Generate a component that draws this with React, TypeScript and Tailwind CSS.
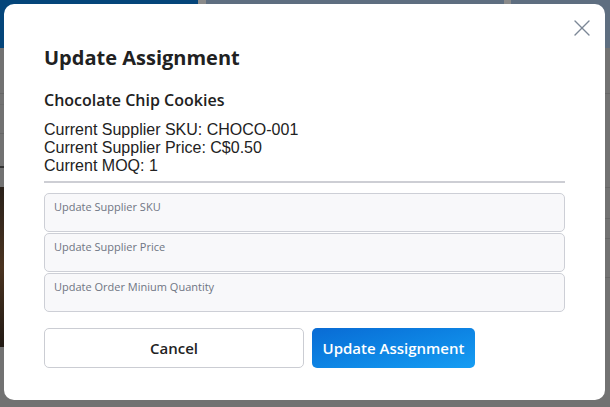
import { X } from 'lucide-react';

function Field({ label }: { label: string }) {
  return (
    <div className="h-[39px] rounded-[5px] border border-[#cdcfd6] bg-[#f8f8fa] px-[9px] pt-[5px] text-[11px] leading-[15px] text-[#6f7583]">
      {label}
    </div>
  );
}

export default function App() {
  return (
    <div className="relative h-[407px] w-[610px] overflow-hidden bg-[#727272] font-['Open_Sans',sans-serif]">
      {/* Dimmed page behind the dialog */}
      <div className="flex h-[48px]">
        <div className="w-[198px] bg-[#04457a]" />
        <div className="w-[8px] bg-[#8a8a8a]" />
        <div className="w-[298px] bg-[#5e6e80]" />
        <div className="w-[7px] bg-[#8a8a8a]" />
        <div className="flex-1 bg-[#5e6e80]" />
      </div>
      <div className="flex justify-between">
        <div className="flex w-[20px] flex-col">
          <div className="h-[46px] border-b border-[#666]" />
          <div className="h-[11px] border-b border-[#6c6c6c]" />
          <div className="h-[29px] border-b border-[#666]" />
          <div className="h-[34px] border-b-2 border-[#333]" />
          <div className="h-[19px]" />
          <div className="h-[160px] bg-gradient-to-b from-[#2a211a] via-[#4a3320] to-[#221a14]" />
        </div>
        <div className="flex w-[20px] flex-col">
          <div className="h-[46px] border-b border-[#666]" />
          <div className="h-[94px] border-b border-[#666]" />
          <div className="h-[31px] border-b border-[#666]" />
          <div className="h-[20px] border-b border-[#666]" />
          <div className="h-[39px] border-b border-[#666]" />
        </div>
      </div>

      {/* Dialog */}
      <div className="absolute left-[4px] top-[4px] flex h-[396px] w-[601px] flex-col rounded-[10px] bg-white px-[40px] pt-[42px]">
        <button className="absolute right-[9px] top-[10px] text-[#7b8796]">
          <X size={28} strokeWidth={1.2} />
        </button>
        <h2 className="text-[20px] font-bold leading-[24px] text-[#212121]">Update Assignment</h2>
        <h3 className="mt-[20px] text-[16px] font-[550] leading-[20px] text-[#212121]">Chocolate Chip Cookies</h3>
        <div className="mt-[11px] font-['Liberation_Sans',sans-serif] text-[16px] leading-[18px] text-[#222]">
          <p>Current Supplier SKU: CHOCO-001</p>
          <p>Current Supplier Price: C$0.50</p>
          <p>Current MOQ: 1</p>
        </div>
        <div className="mt-[6px] h-[2px] bg-[#cdced4]" />
        <div className="mt-[10px] flex flex-col gap-[1px]">
          <Field label="Update Supplier SKU" />
          <Field label="Update Supplier Price" />
          <Field label="Update Order Minium Quantity" />
        </div>
        <div className="mt-[16px] flex gap-[8px]">
          <button className="h-[40px] w-[260px] rounded-[5px] border border-[#cbcdd3] bg-white text-[15px] font-[550] text-[#222]">
            Cancel
          </button>
          <button className="h-[40px] w-[163px] rounded-[5px] bg-gradient-to-br from-[#0a6bd4] to-[#169df3] text-[15px] font-[550] text-white">
            Update Assignment
          </button>
        </div>
      </div>
    </div>
  );
}
